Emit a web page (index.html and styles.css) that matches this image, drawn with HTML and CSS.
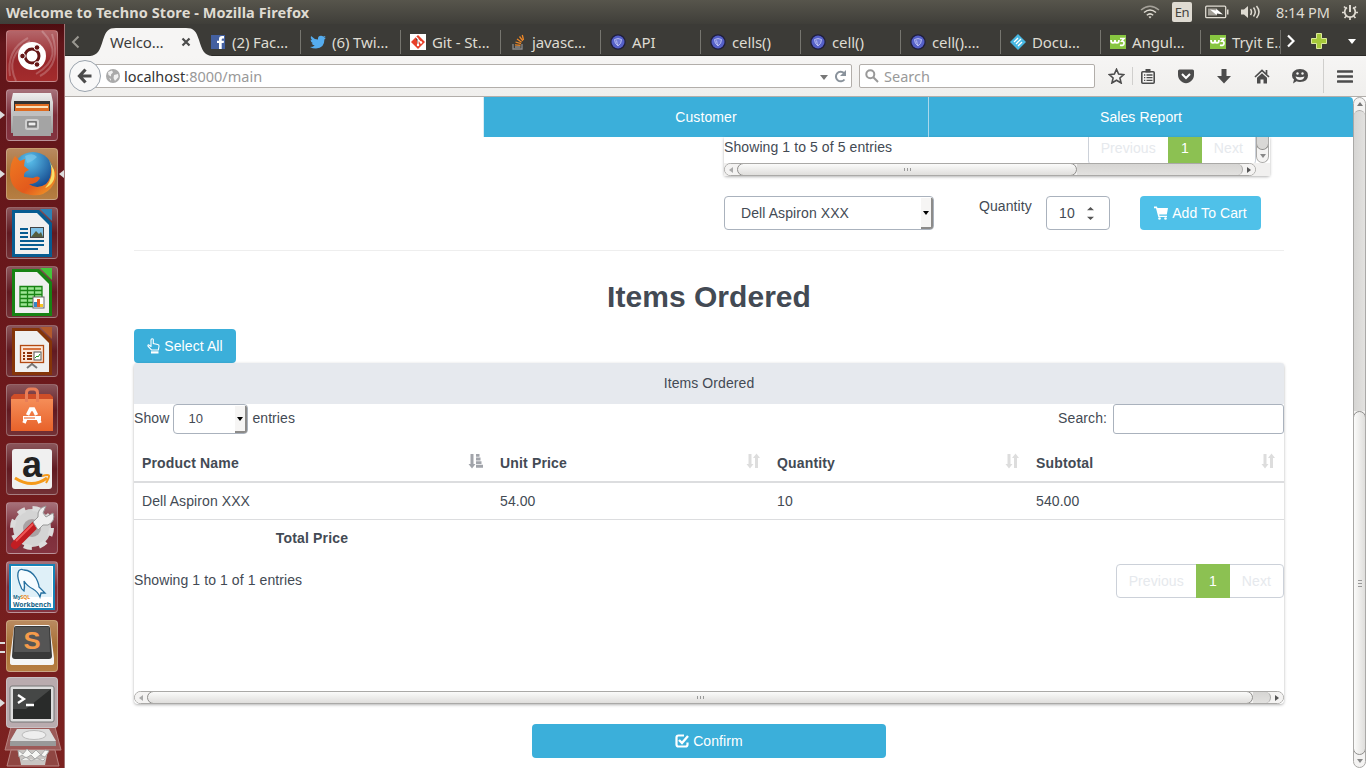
FILE: index.html
```html
<!DOCTYPE html>
<html lang="en">
<head>
<meta charset="utf-8">
<title>Welcome to Techno Store</title>
<link rel="stylesheet" href="styles.css">
</head>
<body>
<svg class="defs" aria-hidden="true">
  <defs>
    <linearGradient id="metal" x1="0" y1="0" x2="0" y2="1"><stop offset="0" stop-color="#eee"/><stop offset="1" stop-color="#999"/></linearGradient>
    <linearGradient id="bag" x1="0" y1="0" x2="0" y2="1"><stop offset="0" stop-color="#f58d58"/><stop offset="1" stop-color="#e8622a"/></linearGradient>
    <linearGradient id="fox" x1="0" y1="0" x2="1" y2="1"><stop offset="0" stop-color="#ee7a22"/><stop offset=".6" stop-color="#e35a1c"/><stop offset="1" stop-color="#f3a52c"/></linearGradient>
    <radialGradient id="globe" cx=".4" cy=".2" r=".8"><stop offset="0" stop-color="#5cc3ee"/><stop offset="1" stop-color="#0f3f86"/></radialGradient>
    <symbol id="sort" viewBox="0 0 14 16"><path d="M2.500 1h3v10h2L4 15.500.5 11h2zM9 15h3V5h2l-3.500-4.500L7 5h2z"/></symbol>
    <symbol id="sorted" viewBox="0 0 16 16"><path d="M2.500 1h3v10h2L4 15.500.5 11h2zM8 1h3.500v2.800H8zM8 4.500h4.500V7.500H8zM8 8.200h5.500v2.800H8zM8 11.700h7v3H8z"/></symbol>
    <symbol id="purple" viewBox="0 0 16 16"><circle cx="8" cy="8" r="7.700" fill="#1e1d3c"/><circle cx="8" cy="8" r="6.500" fill="#5560c8"/><path d="M4.500 5.500Q8 3.500 11.500 5.500Q11.500 10 8 12Q4.500 10 4.500 5.500zM6.500 6.500Q7 9.500 8 12" fill="#7079d6" stroke="#b4baf0"/></symbol>
    <symbol id="w3" viewBox="0 0 16 14"><rect width="16" height="14" fill="#87c540"/><path d="M1 5q0 3 2 3t2-3q0 3 2 3t2-3M10 3.500h4l-2.200 2.700q2.600 0 2.200 2.400t-4 1.600" fill="none" stroke="#fff" stroke-width="1.700"/></symbol>
  </defs>
</svg>

<header class="titlebar">
  <h1 class="window-title">Welcome to Techno Store - Mozilla Firefox</h1>
  <div class="indicators">
    <svg width="20" height="16" viewBox="0 0 20 16" fill="none" stroke="#dfdbd2" stroke-width="1.500"><path d="M1 6Q10-1.500 19 6" opacity=".6"/><path d="M4 8.500Q10 3.500 16 8.500M6.800 11.200Q10 8.500 13.200 11.200"/><path d="M8.500 12.800L10 14.500l1.500-1.700Q10 11.800 8.500 12.800z" fill="#dfdbd2" stroke="none"/></svg>
    <span class="lang">En</span>
    <svg width="24" height="14" viewBox="0 0 24 14"><rect x=".7" y="1.200" width="20" height="11.500" rx="1" fill="none" stroke="#dfdbd2" stroke-width="1.300"/><rect x="3" y="3.500" width="9" height="7" fill="#a19e96"/><path d="M22 4.500h1.500v5H22z" fill="#dfdbd2"/><path d="M5 4.500l6 1 .5-1.500L18 9.500l-6-1-.5 1.500z" fill="#fff"/></svg>
    <svg width="22" height="16" viewBox="0 0 22 16"><path d="M1 5.500h3L8 2v12l-4-3.500H1z" fill="#dfdbd2"/><path d="M10.500 5q2 3 0 6M13.500 3.500q3.500 4.500 0 9M16.500 2q5 6 0 12" fill="none" stroke="#dfdbd2" stroke-width="1.500"/></svg>
    <span class="clock">8:14 PM</span>
    <svg width="18" height="18" viewBox="0 0 18 18" fill="none" stroke="#dfdbd2"><path d="M6 4.500A5.300 5.300 0 1 0 12 4.500" stroke-width="1.700"/><path d="M9 2v7" stroke-width="2"/><path d="M1 9.500h3M14 9.500h3M9 14v3M3 3.500l2 2M15 3.500l-2 2M3.500 15l2-2M14.500 15l-2-2" stroke-width="1.700"/></svg>
  </div>
</header>

<div class="desktop">
  <nav class="launcher">
    <div class="tile red"><svg viewBox="0 0 52 52"><path d="M4 46Q0 20 22 8M10 51Q-2 26 24 11M46 4Q56 34 34 46M36 1Q60 26 30 44" fill="none" stroke="#fff" stroke-width="2" opacity=".22"/><circle cx="26" cy="26" r="14" fill="#fff"/><circle cx="26" cy="26" r="7" fill="none" stroke="#651515" stroke-width="3"/><g fill="#651515" stroke="#fff"><circle cx="16.500" cy="26" r="2.800"/><circle cx="31" cy="17.500" r="2.800"/><circle cx="31" cy="34.500" r="2.800"/></g></svg></div>
    <div class="tile rose run"><svg viewBox="0 0 52 52"><path d="M7 4h38l2 9v31H5V13z" fill="url(#metal)"/><path d="M8 12h36v12H8z" fill="#333"/><path d="M9 15h34v8H9z" fill="#de6b20"/><path d="M10 17h32v2H10z" fill="#fae1bb"/><path d="M7 22h38v25H7z" fill="#a4a4a4"/><path d="M7 22h38v5H7z" fill="#c0c0c0"/><rect x="20" y="31" width="12" height="9" rx="1.500" fill="#999" stroke="#d0d0d0" stroke-width="2"/><rect x="22" y="33" width="8" height="4" fill="#eee" stroke="#555"/></svg></div>
    <div class="tile tan run focus"><svg viewBox="0 0 52 52"><circle cx="27" cy="24" r="20" fill="url(#globe)"/><path d="M19 8q8-4 12 1-5 5-10 6z" fill="#7ac6ea" opacity=".7"/><path d="M9 8l5 5 5-2-1 7 5 4q-6 2-5 7l9 1q5-3 7 0-3 6-11 6 8 6 17 0 6-6 5-17l4 5 0-7q4 14-4 23-8 9-20 7Q5 44 4 27 4 14 9 8z" fill="url(#fox)"/><path d="M43 12q7 16-4 28 12-5 9-18z" fill="#f8e06a"/></svg></div>
    <div class="tile wine"><svg viewBox="0 0 52 52"><path d="M6 3h27l13 13v34H6z" fill="#075c91"/><path d="M34 2h12v12z" fill="#2e82b5"/><path d="M9 6h22l12 12v29H9z" fill="#f0f0f0"/><path d="M14 22h8M14 26h8M14 30h8M14 34h24M14 38h24M14 42h18" stroke="#075c91" stroke-width="2"/><rect x="24.500" y="20.500" width="13" height="10" fill="#7fc2e7" stroke="#444"/><path d="M25 30l5-6 3 3 2-2 2 5z" fill="#555d3c"/></svg></div>
    <div class="tile wine"><svg viewBox="0 0 52 52"><path d="M6 3h27l13 13v34H6z" fill="#188314"/><path d="M34 2h12v12z" fill="#44c53b"/><path d="M9 6h22l12 12v29H9z" fill="#f0f0f0"/><path d="M14 20h22v21H14z" fill="#9ce594"/><path d="M14 20.500h22v20H14zM14 24.500h22M14 28.500h22M14 32.500h22M14 36.500h22M21.500 20v21M28.500 20v21" fill="none" stroke="#188314" stroke-width="1.300"/><rect x="27" y="31" width="11" height="11" fill="#fff" stroke="#666"/><path d="M28 36h3v5h-3z" fill="#3584c8"/><path d="M31 33h3v8h-3z" fill="#e55e23"/><path d="M34 38h3v3h-3z" fill="#f6c623"/></svg></div>
    <div class="tile wine"><svg viewBox="0 0 52 52"><path d="M6 3h27l13 13v34H6z" fill="#853509"/><path d="M34 2h12v12z" fill="#b35a2c"/><path d="M9 6h22l12 12v29H9z" fill="#f0f0f0"/><path d="M26 37v2M21 43l5-4 5 4" stroke="#777" stroke-width="2" fill="none"/><rect x="14.500" y="20.500" width="23" height="17" fill="#fbe6d8" stroke="#b34a13" stroke-width="1.300"/><path d="M17 24h18" stroke="#d77440" stroke-width="2"/><path d="M17 28h2M17 31h2M17 34h2M21 28h5M21 31h5M21 34h5" stroke="#8e3006" stroke-width="2"/><rect x="28" y="27" width="7" height="8" fill="#fff" stroke="#555"/><path d="M29 33l2-2 1 1 2-3" stroke="#219824" fill="none"/></svg></div>
    <div class="tile wine"><svg viewBox="0 0 52 52"><path d="M5 13l3-3h36l3 3v3H5z" fill="#cf4e28"/><path d="M5 15h42v32H5z" fill="url(#bag)"/><path d="M20.500 18V9q0-4 4-4h3q4 0 4 4v9" fill="none" stroke="#e87e58" stroke-width="3"/><path d="M18 39l2.500-6M24 25.500h4M34 39l-2.500-6M21.500 31l3-6h3l3 6" fill="none" stroke="#fff" stroke-width="3.500"/><path d="M17 34h18" stroke="#fff" stroke-width="4"/><path d="M18 34h11" stroke="#ee7440" stroke-width="1.200"/></svg></div>
    <div class="tile wine"><svg viewBox="0 0 52 52"><rect x="6" y="6" width="40" height="40" rx="3" fill="#f0f0f0"/><text x="26" y="34" text-anchor="middle" class="a-mark">a</text><path d="M9 35q17 11 32 0" fill="none" stroke="#f59a1b" stroke-width="2.800"/><path d="M36 33q7-2 7 0t-3 7" fill="none" stroke="#f59a1b" stroke-width="2"/></svg></div>
    <div class="tile rose"><svg viewBox="0 0 52 52"><circle cx="26" cy="26" r="19" fill="#d4d4d4"/><circle cx="26" cy="26" r="19.500" fill="none" stroke="#dcdcdc" stroke-width="5" stroke-dasharray="8 7.300"/><circle cx="26" cy="26" r="9" fill="#a9a2a4"/><path d="M9 43L29 23" stroke="#c21d22" stroke-width="8" stroke-linecap="round"/><path d="M10 39L27 22" stroke="#ef5756" stroke-width="2"/><path d="M27 20l5-5q-1-9 8-11l-3 7 3 4 7-4q3 8-5 12l-5 0-5 5z" fill="#eee" stroke="#999"/></svg></div>
    <div class="tile rose"><svg viewBox="0 0 52 52"><rect x="4" y="4" width="44" height="44" fill="#fff" stroke="#1583b8" stroke-width="2"/><path d="M6 6h40v30H6z" fill="#dff0f8"/><path d="M15 26q-4-9-3-14 1-5 6-3 7 0 12 8 3 6 3 9l6 6-4 0-1 4q-2-5-7-8-6-3-9-8 1 6 0 10-3-2-3-4z" fill="#f6fcff" stroke="#256f9f" stroke-width="1.300"/><text x="7" y="38" class="mysql">My<tspan fill="#e8871a">SQL</tspan></text><text x="7" y="46" class="bench" textLength="38" lengthAdjust="spacingAndGlyphs">Workbench</text></svg></div>
    <div class="tile tan run2"><svg viewBox="0 0 52 52"><path d="M4 38L8 7q0-2 2-2h32q2 0 2 2l4 31v5q0 2-3 2H7q-3 0-3-2z" fill="#f5f5f5"/><path d="M6 36L8 8q0-2 2-2h32q2 0 2 2l2 28q0 3-3 3H9q-3 0-3-3z" fill="#393939"/><path d="M9 7h34l1 25H8z" fill="#555"/><text x="26" y="29" text-anchor="middle" class="s-mark" textLength="17" lengthAdjust="spacingAndGlyphs">S</text></svg></div>
    <div class="tile gray run"><svg viewBox="0 0 52 52"><rect x="4" y="9" width="44" height="36" rx="2" fill="#ddd" stroke="#777"/><rect x="7" y="12" width="38" height="30" fill="#292b2a"/><path d="M7 12h38L20 32H7z" fill="#454746"/><path d="M12 18l6 4-6 4M20 28h8" fill="none" stroke="#fff" stroke-width="2.300"/></svg></div>
    <svg class="stack" viewBox="0 0 60 42"><path d="M8 1h44l6 23H2z" fill="#9c5a58" stroke="#b98380"/><path d="M14 3h32l7 13v4H7v-4z" fill="#999"/><path d="M14 3h32l7 12H7z" fill="#ddd"/><ellipse cx="31" cy="9" rx="12" ry="4.500" fill="#eee" stroke="#bbb"/><path d="M8 24h44l4 16H4z" fill="#8f4642" stroke="#b98380"/><path d="M15 24h30l-3 15H18z" fill="#c9c5c2"/><path d="M15 24l5 4 4-5 5 5 4-4 5 5 4-5 4 1-4 6-5-2-5 4-4-4-5 3-4-3-3 2zM18 34l5-3 5 4 6-3 6 3 2-2" fill="#f7f7f5" stroke="#aaa"/></svg>
  </nav>

  <main class="browser">
    <div class="tabbar">
      <svg class="tab-back" width="10" height="14" viewBox="0 0 10 14"><path d="M7.500 1.500L2 7l5.500 5.500" fill="none" stroke="#9a9891" stroke-width="2"/></svg>
      <div class="tab active"><svg class="tab-shape" viewBox="0 0 130 28"><path d="M4 28C12 27 14 22 17 12 20 3 22 0 30 0H100C108 0 110 3 113 12 116 22 118 27 126 28z" fill="#f6f5f4"/></svg><span>Welco…</span><svg class="close" width="10" height="10" viewBox="0 0 10 10"><path d="M1.500 1.500l7 7M8.500 1.500l-7 7" stroke="#4c4c4c" stroke-width="2.200"/></svg></div>
      <div class="tab first"><svg viewBox="0 0 16 16"><rect x="1" y="1" width="14" height="14" fill="#4460a0"/><path d="M9 15V9H7V6.700h2V5q0-3 3-3h2v2.500h-1.300q-1 0-1 1v1.200H14L13.700 9h-2v6z" fill="#fff"/></svg><span>(2) Fac…</span></div>
      <div class="tab"><svg viewBox="0 0 16 16"><path d="M1 2q3 3.300 7 3.500Q7.500 2 11 1.700q1.400 0 2.300.9L15.500 2l-1.300 2L16 3.700l-1.600 1.700Q14.500 14 6 14.500 2.500 14.500 0 13q3 0 4.700-1.500-2.400-.3-3.100-2.300h1.500Q.7 8.300.5 5.700l1.500.5Q0 4.300 1 2z" fill="#55acee"/></svg><span>(6) Twi…</span></div>
      <div class="tab"><svg viewBox="0 0 16 16"><path d="M0 0h16v16H0z" fill="#fff"/><path d="M8 1l7 7-7 7-7-7z" fill="#e8402a"/><path d="M6 3l2 2v6M8 5.500l3 3" stroke="#fff" stroke-width="1.200"/><circle cx="8" cy="11" r="1.200" fill="#fff"/><circle cx="11" cy="8.500" r="1.200" fill="#fff"/></svg><span>Git - St…</span></div>
      <div class="tab"><svg viewBox="0 0 16 16"><path d="M3 10v5h9v-5" fill="none" stroke="#8b8b8b" stroke-width="1.300"/><path d="M5 13h5.500" stroke="#999" stroke-width="1.300"/><path d="M5 10.800l5.500.5M5.500 8l5.500 1.700M7 5l4.600 3.200M9.500 2.500l3.300 4.400M12.300 1l1.200 5" stroke="#ee8828" stroke-width="1.300"/></svg><span>javasc…</span></div>
      <div class="tab"><svg><use href="#purple"/></svg><span>API</span></div>
      <div class="tab"><svg><use href="#purple"/></svg><span>cells()</span></div>
      <div class="tab"><svg><use href="#purple"/></svg><span>cell()</span></div>
      <div class="tab"><svg><use href="#purple"/></svg><span>cell()….</span></div>
      <div class="tab"><svg viewBox="0 0 16 16"><path d="M8 0l8 8-8 8-8-8z" fill="#47b8e3"/><path d="M4 8l4-4M6 10l5-5M8 12l4-4" stroke="#fff" stroke-width="1.300"/></svg><span>Docu…</span></div>
      <div class="tab"><svg><use href="#w3"/></svg><span>Angul…</span></div>
      <div class="tab last"><svg><use href="#w3"/></svg><span>Tryit E…</span></div>
      <div class="tab-tools">
        <svg width="8" height="14" viewBox="0 0 8 14"><path d="M1 1.500L6.500 7 1 12.500" fill="none" stroke="#fff" stroke-width="2.200"/></svg>
        <svg width="16" height="16" viewBox="0 0 16 16"><path d="M5.500.5h5v5h5v5h-5v5h-5v-5h-5v-5h5z" fill="#a6c93b" stroke="#dceb9a"/></svg>
        <svg width="8" height="5" viewBox="0 0 8 5"><path d="M0 0h8L4 5z" fill="#fff"/></svg>
      </div>
    </div>

    <div class="toolbar">
      <span class="back"><svg width="16" height="16" viewBox="0 0 16 16"><path d="M8.500 1.500L2.500 8l6 6.500M3 8h11.500" fill="none" stroke="#4c4c4c" stroke-width="3.200"/></svg></span>
      <div class="url">
        <svg width="14" height="14" viewBox="0 0 14 14"><circle cx="7" cy="7" r="7" fill="#aaa"/><path d="M2 3l4-1.500 1 2-2 2v2L2.500 6zM8 6l4-1 .5 3L9 12 7.500 9zM3 9l2 1v2z" fill="#f1f1f1"/></svg>
        <span class="host">localhost<span class="path">:8000/main</span></span>
        <svg class="drop" width="8" height="5" viewBox="0 0 8 5"><path d="M0 0h8L4 5z" fill="#777"/></svg>
        <svg width="13" height="13" viewBox="0 0 13 13"><path d="M10.500 9.500A4.800 4.800 0 1 1 10 3" fill="none" stroke="#8a939c" stroke-width="2"/><path d="M12 0v6H6z" fill="#8a939c"/></svg>
      </div>
      <div class="searchbox"><svg width="14" height="14" viewBox="0 0 14 14" fill="none" stroke="#999" stroke-width="2"><circle cx="5.300" cy="5.300" r="4"/><path d="M8.300 8.300L13 13"/></svg><span>Search</span></div>
      <div class="tools">
        <svg width="17" height="16" viewBox="0 0 17 16"><path d="M8.500 1.300l2.100 4.800 5.200.5-3.900 3.400 1.200 5-4.600-2.700L3.900 15l1.200-5L1.200 6.600l5.200-.5z" fill="none" stroke="#4c4c4c" stroke-width="1.600"/></svg>
        <i class="sep s1"></i>
        <svg class="t2" width="14" height="15" viewBox="0 0 14 15"><rect x=".8" y="2.800" width="12.400" height="11.400" rx="1" fill="#f5f4f3" stroke="#4c4c4c" stroke-width="1.600"/><path d="M4.500 0h5v3.500h-5z" fill="#4c4c4c"/><path d="M3 6h1.300M3 8.700h1.300M3 11.400h1.300M5.500 6H11.500M5.500 8.700H11.500M5.500 11.400H11.500" stroke="#4c4c4c" stroke-width="1.300"/></svg>
        <svg class="t3" width="16" height="15" viewBox="0 0 16 15"><path d="M1.500.5h13q1.500 0 1.500 1.500v4q0 5-5 7.500-3 1.500-6 0Q0 11 0 6V2Q0 .5 1.500.5z" fill="#4c4c4c"/><path d="M4 5l4 4 4-4" fill="none" stroke="#fff" stroke-width="2"/></svg>
        <svg class="t4" width="14" height="15" viewBox="0 0 14 15"><path d="M4.500 0h5v7H14l-7 7.500L0 7h4.500z" fill="#4c4c4c"/></svg>
        <svg class="t5" width="16" height="15" viewBox="0 0 16 15"><path d="M1 8l7-6.500L15 8M12.500 1v4" fill="none" stroke="#4c4c4c" stroke-width="1.700"/><path d="M3 8.800L8 4.300l5 4.500V14.500H9.500v-4h-3v4H3z" fill="#4c4c4c"/></svg>
        <svg class="t6" width="16" height="15" viewBox="0 0 16 15"><path d="M8 0q8 .5 8 6.500T8 13q-2 0-3.500-.7L1 14.500 2 10.500Q0 9 0 6.500 0 .5 8 0z" fill="#4c4c4c"/><path d="M3.500 7.500q4.500 1.500 9 0-1 3.500-4.500 3.500T3.500 7.500z" fill="#f4f3f2"/><circle cx="5.500" cy="4.500" r="1.200" fill="#f4f3f2"/><circle cx="10.500" cy="4.500" r="1.200" fill="#f4f3f2"/></svg>
        <i class="sep s2"></i>
        <svg class="t7" width="16" height="13" viewBox="0 0 16 13"><path d="M1 1.500h14M1 6.500h14M1 11.500h14" stroke="#4c4c4c" stroke-width="2.600" stroke-linecap="round"/></svg>
      </div>
    </div>

    <div class="view">
      <div class="page">
        <nav class="navbar"><a class="customer">Customer</a><a class="report">Sales Report</a></nav>
        <div class="content">
          <section class="picker">
            <div class="picker-scroll">
              <div class="picker-body">
                <span class="info">Showing 1 to 5 of 5 entries</span>
                <ul class="pagination"><li>Previous</li><li class="current">1</li><li>Next</li></ul>
              </div>
              <div class="vbar small"><i class="vthumb"></i><i class="vbtn"><b class="dn"></b></i></div>
            </div>
            <div class="hwrap"><div class="hbar"><i class="hbtn l"><b></b></i><i class="hthumb part"><em></em></i><i class="htrack"></i><i class="hbtn r"><b></b></i></div></div>
          </section>
          <div class="form-row">
            <div class="select product"><span>Dell Aspiron XXX</span><i class="arrow"></i></div>
            <label class="qty-label">Quantity</label>
            <div class="qty"><span>10</span><svg width="7" height="13" viewBox="0 0 7 13"><path d="M3.500 0L7 3.300H0zM0 9.700h7L3.500 13z" fill="#555"/></svg></div>
            <a class="btn cart"><svg width="14" height="14" viewBox="0 0 14 14"><path d="M0 .5h2.800l.7 1.500H14L12.800 8.500H5.200l.3 1.300H13V11H4.300L2 2.200H0z" fill="#fff"/><circle cx="5.500" cy="12.500" r="1.300" fill="#fff"/><circle cx="11.500" cy="12.500" r="1.300" fill="#fff"/></svg>Add To Cart</a>
          </div>
          <hr class="rule">
          <h2 class="heading">Items Ordered</h2>
          <a class="btn select-all"><svg width="13" height="16" viewBox="0 0 13 16"><path d="M4 9V2q0-1.300 1.200-1.300T6.300 2v3.500l4.500 1q1.500.3 1.200 2l-.7 3.500H4.500L1.200 8.500q-.8-1.300.5-1.600L4 8.500z" fill="none" stroke="#fff" stroke-width="1.100"/><path d="M4 13.300h7.500V15.500H4z" fill="#fff"/></svg>Select All</a>
          <section class="panel">
            <div class="panel-head">Items Ordered</div>
            <div class="panel-body">
              <div class="controls">
                <span>Show</span><div class="select length"><span>10</span><i class="arrow"></i></div><span>entries</span>
                <span class="search-label">Search:</span><div class="filter"></div>
              </div>
              <table class="items">
                <thead><tr>
                  <th class="c1"><div>Product Name<svg class="on"><use href="#sorted"/></svg></div></th>
                  <th class="c2"><div>Unit Price<svg><use href="#sort"/></svg></div></th>
                  <th class="c3"><div>Quantity<svg><use href="#sort"/></svg></div></th>
                  <th class="c4"><div>Subtotal<svg><use href="#sort"/></svg></div></th>
                </tr></thead>
                <tbody><tr><td>Dell Aspiron XXX</td><td>54.00</td><td>10</td><td>540.00</td></tr></tbody>
                <tfoot><tr><th>Total Price</th><th></th><th></th><th></th></tr></tfoot>
              </table>
              <div class="footer-row">
                <span>Showing 1 to 1 of 1 entries</span>
                <ul class="pagination"><li>Previous</li><li class="current">1</li><li>Next</li></ul>
              </div>
            </div>
            <div class="hbar"><i class="hbtn l"><b></b></i><i class="hthumb"><em></em></i><i class="htrack short"></i><i class="hbtn r"><b></b></i></div>
          </section>
          <a class="btn confirm"><svg width="14" height="14" viewBox="0 0 14 14"><path d="M9 1.500H3.500q-2 0-2 2v7q0 2 2 2h7q2 0 2-2V8.500" fill="none" stroke="#fff" stroke-width="2.200"/><path d="M4 6l3 3 6-7" fill="none" stroke="#fff" stroke-width="2.400"/></svg>Confirm</a>
        </div>
      </div>
      <div class="vbar main"><i class="vbtn"><b class="up"></b></i><i class="vtrack"></i><i class="vthumb"><em></em></i><i class="vbtn"><b class="dn"></b></i></div>
    </div>
  </main>
</div>
</body>
</html>
```
FILE: styles.css
```css
* { box-sizing: border-box; }
body { margin: 0; width: 1366px; height: 768px; overflow: hidden; display: flex; flex-direction: column; font: 14px/20px "Liberation Sans", Arial, sans-serif; color: #434a54; background: #fff; }
svg { display: block; flex: none; }
i { display: block; }
.defs { position: absolute; width: 0; height: 0; }

/* desktop top panel */
.titlebar { height: 24px; flex: none; display: flex; justify-content: space-between; align-items: center; padding: 0 7px 0 6px; background: linear-gradient(#57554c, #3f3e39); color: #dfdbd2; font-family: "Noto Sans", "Open Sans", sans-serif; }
.window-title { margin: 0; font-size: 14.5px; line-height: 24px; font-weight: 700; letter-spacing: .09px; white-space: nowrap; }
.indicators { display: flex; align-items: center; height: 24px; }
.lang { margin: 0 13px 0 12px; width: 20px; height: 20px; border-radius: 2px; background: #dfdbd2; color: #45433e; font-size: 13px; line-height: 20px; text-align: center; letter-spacing: -.5px; }
.indicators svg:nth-of-type(3) { margin-left: 11px; }
.clock { margin: 0 12px 0 14px; width: 53px; white-space: nowrap; font-size: 14.5px; letter-spacing: -.1px; }

.desktop { flex: 1; display: flex; min-height: 0; }

/* launcher */
.launcher { width: 65px; flex: none; padding: 6px 0 0 6px; display: flex; flex-direction: column; gap: 7px; background: linear-gradient(#4e0c10, #62161a 20px, #6c191c 50%, #7c2220); border-right: 1px solid #a27374; overflow: hidden; position: relative; }
.tile { width: 52px; height: 52px; flex: none; border-radius: 4px; border: 1px solid rgba(255,255,255,.25); position: relative; }
.tile > svg { width: 52px; height: 52px; margin: -1px; overflow: visible; }
.red { background: linear-gradient(#b4666a, #98262a 60%, #a42c2c); }
.rose { background: linear-gradient(#a6717a, #7c2d39 50%, #843440); }
.tan { background: linear-gradient(#b98a60, #a87034 50%, #b67e42); }
.wine { background: linear-gradient(#8a555a, #611a21 50%, #733136); }
.gray { background: #b9abae; height: 51px; margin-top: -2px; }
.run::before { content: ""; position: absolute; left: -7px; top: 21px; border: 4px solid transparent; border-left: 5px solid #ddd; border-right: 0; }
.focus::after { content: ""; position: absolute; right: -7px; top: 21px; border: 4px solid transparent; border-right: 5px solid #ddd; border-left: 0; }
.run2::before { content: ""; position: absolute; left: -7px; top: 21px; width: 5px; height: 7px; border: solid #ddd; border-width: 2px 0; }
.stack { width: 60px; height: 42px; margin: -9px 0 0 -3px; }
.a-mark { font: bold 36px "Liberation Sans", sans-serif; fill: #222; }
.mysql { font: bold 5px "Noto Sans", sans-serif; fill: #176487; }
.bench { font: bold 6.5px "Noto Sans", sans-serif; fill: #176487; }
.s-mark { font: bold 24px "Liberation Sans", sans-serif; fill: #f49b4b; }

.browser { flex: 1; display: flex; flex-direction: column; min-width: 0; }

/* tabs */
.tabbar { height: 32px; flex: none; display: flex; background: #3c3b37; border-bottom: 1px solid #2c2b28; font: 15px/20px "Noto Sans", "Open Sans", sans-serif; color: #dfdbd2; position: relative; }
.tab-back { margin: 11px 19px 0 6px; }
.tab { width: 100px; height: 24px; margin-top: 6px; flex: none; display: flex; align-items: center; padding-left: 9px; border-left: 1px solid #76756f; white-space: nowrap; overflow: hidden; letter-spacing: -.1px; }
.tab svg { width: 16px; height: 16px; margin-right: 6px; }
.tab.active { color: #3c3c3c; border: 0; position: relative; overflow: visible; height: 24px; padding-left: 10px; }
.tab.active span { position: relative; width: 71px; }
.tab.active .tab-shape { position: absolute; left: -14px; top: -2px; width: 130px; height: 28px; margin: 0; z-index: 0; }
.tab.active .close { position: relative; width: 10px; height: 10px; margin: 0; }
.tab.first { border-left-color: transparent; }
.tab.last { width: 81px; border-right: 1px solid #6c6b66; }
.tab-tools { flex: 1; display: flex; align-items: center; padding-left: 6px; height: 34px; }
.tab-tools svg:nth-child(2) { margin-left: 16px; }
.tab-tools svg:nth-child(3) { margin-left: 21px; }

/* navigation toolbar */
.toolbar { height: 41px; flex: none; display: flex; align-items: center; background: linear-gradient(#f6f5f4, #f0efed); border-bottom: 1px solid #b2aeaa; padding-left: 4px; font: 14.5px/20px "Noto Sans", "Open Sans", sans-serif; }
.back { width: 32px; height: 32px; flex: none; border-radius: 50%; border: 1px solid #9aa3ad; background: #f8f8f8; display: flex; align-items: center; justify-content: center; position: relative; z-index: 1; }
.url { width: 757px; height: 24px; margin-left: -6px; flex: none; border: 1px solid #b2aeaa; border-radius: 0 2px 2px 0; background: #fff; display: flex; align-items: center; padding: 0 4px 0 10px; }
.host { margin-left: 4px; color: #333; letter-spacing: 0; }
.path { color: #999; }
.drop { margin: 2px 6px 0 auto; }
.searchbox { width: 236px; height: 24px; flex: none; margin-left: 7px; border: 1px solid #b2aeaa; border-radius: 2px; background: #fff; display: flex; align-items: center; gap: 5px; padding-left: 5px; color: #999; }
.tools { display: flex; align-items: center; margin-left: 13px; }
.sep { width: 1px; background: #d0cfcd; }
.s1 { height: 18px; margin-left: 7px; }
.s2 { height: 34px; margin-left: 15px; }
.t2 { margin-left: 8px; }
.t3 { margin-left: 23px; }
.t4 { margin-left: 23px; }
.t5 { margin-left: 23px; }
.t6 { margin-left: 22px; }
.t7 { margin-left: 13px; }

/* page viewport */
.view { flex: 1; display: flex; min-height: 0; }
.page { flex: 1; min-width: 0; overflow: hidden; letter-spacing: .09px; }
.navbar { height: 40px; margin-left: 418px; display: flex; background: #3bafda; color: #fff; line-height: 40px; text-align: center; border-radius: 0 4px 0 0; border-left: 1px solid #d9edf5; }
.customer { width: 445px; border-right: 1px solid #a9d8ec; }
.report { flex: 1; }
.content { padding: 0 69px; display: flex; flex-direction: column; }

.picker { width: 546px; margin-left: 590px; box-shadow: 0 1px 3px rgba(0,0,0,.3); border-radius: 0 0 3px 3px; }
.picker-scroll { height: 26px; display: flex; overflow: hidden; }
.picker-body { flex: 1; display: flex; justify-content: space-between; align-items: flex-start; overflow: hidden; }
.picker-body .pagination { margin: -6px 0 0; }
.picker .hwrap { background: #f1f0ef; padding-right: 14px; }
.pagination { display: flex; list-style: none; margin: 0; padding: 0; height: 34px; border: 1px solid #ccd1d9; border-radius: 4px; line-height: 32px; color: #e6e9ed; }
.pagination li { padding: 0 12px; }
.pagination .current { margin: -1px 0; width: 34px; padding: 0; line-height: 34px; text-align: center; background: #8cc152; color: #fff; }

/* gtk style scrollbars */
.hbar { height: 13px; flex: none; display: flex; border: 1px solid #aaa9a7; border-radius: 7px; background: linear-gradient(#d6d5d3, #e2e1df); overflow: hidden; }
.hbtn { width: 12px; background: #f4f3f2; display: flex; align-items: center; justify-content: center; }
.hbtn b { border: 3px solid transparent; }
.hbtn.l b { border-right: 4px solid #aaa; border-left: 0; }
.hbtn.r b { border-left: 4px solid #555; border-right: 0; }
.htrack { flex: 1; border-right: 1px solid #aaa9a7; border-radius: 0 7px 7px 0; background: linear-gradient(#d6d5d3, #e2e1df); }
.hbar { background: #f4f3f2; }
.hthumb { flex: 1; margin: -1px 0; border: 1px solid #8e8d8b; border-radius: 7px; background: linear-gradient(#fbfbfa, #dfdedc); display: flex; align-items: center; justify-content: center; }
.hthumb.part { flex: none; width: 340px; }
.hthumb em { width: 7px; height: 3px; background: repeating-linear-gradient(90deg, #999 0 1px, transparent 1px 3px); }
.htrack.short { flex: none; width: 18px; }
.vbar { width: 13px; flex: none; display: flex; flex-direction: column; border: 1px solid #aaa9a7; background: #f4f3f2; border-radius: 7px; overflow: hidden; }
.vbtn { height: 12px; flex: none; display: flex; justify-content: center; align-items: center; }
.vbtn b { border: 3px solid transparent; }
.vbtn .up { border-bottom: 4px solid #777; border-top: 0; }
.vbtn .dn { border-top: 4px solid #888; border-bottom: 0; }
.vthumb { flex: 1; margin: 0 -1px; border: 1px solid #8e8d8b; border-radius: 7px; background: linear-gradient(90deg, #fbfbfa, #dfdedc); display: flex; align-items: center; justify-content: center; }
.vthumb em { width: 4px; height: 7px; background: repeating-linear-gradient(#999 0 1px, transparent 1px 3px); }
.vbar.small { border-top: 0; border-radius: 0 0 7px 7px; margin-right: 1px; }
.small .vthumb { border-top: 0; border-radius: 0 0 7px 7px; background: #d9d8d6; }
.vtrack { flex: none; height: 301px; border-radius: 7px 7px 0 0; border-top: 1px solid #aaa9a7; background: linear-gradient(90deg, #d6d5d3, #e2e1df); }

/* add-to-cart form */
.form-row { display: flex; height: 34px; margin: 20px 0 20px 590px; }
.select { display: flex; justify-content: space-between; border: 1px solid #aab2bd; border-radius: 4px; overflow: hidden; }
.arrow { width: 12px; margin: 1px 0 0; background: #f6f5f4; border: solid #8c8b89; border-width: 0 2px 2px 0; display: flex; align-items: center; justify-content: center; }
.arrow::before { content: ""; border: 3.5px solid transparent; border-top: 4px solid #000; border-bottom: 0; }
.product { width: 210px; line-height: 32px; padding-left: 16px; }
.qty-label { margin-left: 45px; width: 67px; }
.qty { width: 64px; border: 1px solid #aab2bd; border-radius: 4px; line-height: 32px; padding: 0 15px 0 12px; display: flex; align-items: center; justify-content: space-between; }
.btn { display: flex; align-items: center; justify-content: center; gap: 4px; height: 34px; border-radius: 4px; background: #3bafda; color: #fff; }
.cart { width: 121px; margin-left: 30px; background: #4fc1e9; }
.rule { width: 100%; height: 1px; margin: 0; border: 0; background: #eee; }
.heading { margin: 29px 0 16px; font-size: 30px; line-height: 33px; text-align: center; letter-spacing: .04px; }
.select-all { width: 102px; }

/* ordered items panel */
.panel { height: 341px; display: flex; flex-direction: column; box-shadow: 0 1px 3px rgba(0,0,0,.3); border-radius: 4px; }
.panel-head { height: 41px; background: #e6e9ee; text-align: center; line-height: 41px; flex: none; border-radius: 3px 3px 0 0; }
.panel-body { flex: 1; }
.controls { display: flex; height: 30px; line-height: 28px; margin-bottom: 10px; }
.length { width: 75px; margin: 0 4px; padding-left: 14px; font-size: 13px; line-height: 28px; }
.search-label { margin-left: auto; }
.filter { width: 171px; margin-left: 6px; border: 1px solid #aab2bd; border-radius: 3px; }
.items { width: 1150px; table-layout: fixed; border-collapse: separate; border-spacing: 0; text-align: left; }
.items th, .items td { padding: 8px; height: 36px; line-height: 20px; }
.items th { letter-spacing: .16px; }
.items thead th { height: 39px; border-bottom: 2px solid #dcdddf; padding: 8px; }
.items thead div { display: flex; justify-content: space-between; }
.items thead svg { width: 14px; height: 16px; margin-right: 1px; fill: #ddd; }
.items thead svg.on { width: 16px; margin-right: 0; fill: #a1a4aa; }
.items td { border-bottom: 1px solid #dcdddf; height: 37px; }
.items tfoot th:first-child { text-align: center; padding-right: 10px; }
.c1 { width: 358px; } .c2 { width: 277px; } .c3 { width: 259px; }
.footer-row { display: flex; justify-content: space-between; margin-top: 8px; line-height: 32px; }
.confirm { width: 354px; margin: 20px auto 0; }
```
